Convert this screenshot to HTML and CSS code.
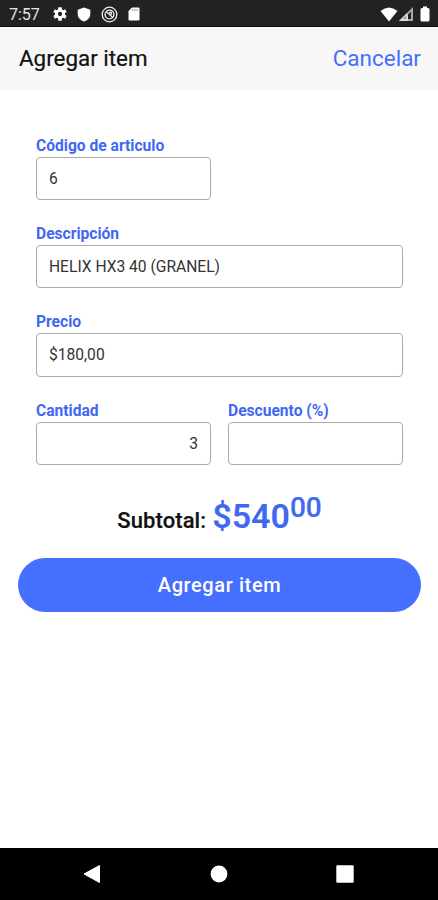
FILE: index.html
```html
<!DOCTYPE html>
<html lang="es">
<head>
<meta charset="utf-8">
<meta name="viewport" content="width=device-width, initial-scale=1">
<title>Agregar item</title>
<link rel="stylesheet" href="styles.css">
</head>
<body>
<div class="screen">
  <div class="status">
    <span class="clock">7:57</span>
    <svg class="gear" width="16" height="16" viewBox="0 0 24 24"><path fill="#fff" fill-rule="evenodd" d="M19.400 13a7.600 7.600 0 0 0 0-2l2.600-2-2.300-4-3 1.200a7.800 7.800 0 0 0-1.700-1L14.500 2h-5l-.5 3.200a7.800 7.800 0 0 0-1.700 1L4.300 5 2 9l2.600 2a7.600 7.600 0 0 0 0 2L2 15l2.300 4 3-1.200a7.800 7.800 0 0 0 1.700 1l.5 3.200h5l.5-3.200a7.800 7.800 0 0 0 1.700-1l3 1.200 2.300-4zM12 15.200a3.200 3.200 0 1 1 0-6.400 3.200 3.200 0 0 1 0 6.400z"/></svg>
    <svg class="shield" width="14" height="15" viewBox="0 0 14 15"><path fill="#fff" d="M7 .5 13.300 2.800v4.200c0 3.500-2.800 6.500-6.300 7.500C3.500 13.500.7 10.500.7 7V2.800z"/></svg>
    <svg class="ring" width="17" height="17" viewBox="0 0 17 17" fill="none" stroke="#eee"><circle cx="8.500" cy="8.500" r="7.300" stroke-width="1.300"/><circle cx="8.500" cy="8.500" r="4.400" stroke-width="1.400"/><path d="m5.300 5.500 6.400 6M8 6.500h2.300v2.300" stroke-width="1.300"/></svg>
    <svg class="sd" width="12" height="14" viewBox="0 0 12 14"><path fill="#fff" d="M4 .5h6.500q1 0 1 1v11q0 1-1 1h-9q-1 0-1-1V4z"/><path stroke="#777" d="M4.700 2.200v1.600M6.900 2.200v1.600M9.100 2.200v1.600"/></svg>
    <svg class="wifi" width="18" height="15" viewBox="0 0 18 15"><path fill="#fff" d="M.5 4Q9-3 17.500 4L9 14.500z"/></svg>
    <svg class="signal" width="16" height="16" viewBox="0 0 16 16"><path fill="#aaa" d="M15 1v14H1z"/><path fill="#222" d="M13 5.500V13H5.500z"/><path fill="#ddd" d="M1 15 9 7v8z"/><path fill="#222" d="m4.500 13 4-4v4z" opacity=".35"/><path fill="#ddd" d="M8.500 8.500h1.500V15H8.500z"/></svg>
    <svg class="battery" width="10" height="16" viewBox="0 0 10 16"><path fill="#fff" d="M3 .5h4V2h1q1.500 0 1.500 1.500v10.500q0 1.500-1.500 1.500H2Q.5 15.500.5 14V3.500Q.5 2 2 2h1z"/></svg>
  </div>
  <header class="header">
    <h1 class="title">Agregar item</h1>
    <a class="cancel">Cancelar</a>
  </header>
  <main class="content">
    <div class="form">
      <div class="field half"><label class="label">Código de articulo</label><div class="box">6</div></div>
      <div class="field wide"><label class="label">Descripción</label><div class="box">HELIX HX3 40 (GRANEL)</div></div>
      <div class="field wide"><label class="label">Precio</label><div class="box">$180,00</div></div>
      <div class="field half"><label class="label">Cantidad</label><div class="box number">3</div></div>
      <div class="field half"><label class="label">Descuento (%)</label><div class="box number"></div></div>
    </div>
    <div class="subtotal"><span class="caption">Subtotal:</span><span class="amount">$540</span><span class="cents">00</span></div>
    <button class="submit">Agregar item</button>
  </main>
  <nav class="navbar">
    <svg width="18" height="20" viewBox="0 0 18 20"><path fill="#fff" stroke="#fff" stroke-linejoin="round" d="M1 10 16.500 1.500v17z"/></svg>
    <svg width="18" height="18" viewBox="0 0 18 18"><circle cx="9" cy="9" r="8.400" fill="#fff"/></svg>
    <svg width="18" height="18" viewBox="0 0 18 18"><rect x=".3" y=".3" width="17.400" height="17.400" rx="1.200" fill="#fff"/></svg>
  </nav>
</div>
</body>
</html>
```
FILE: styles.css
```css
* { box-sizing: border-box; }
body { margin: 0; background: #fff; font-family: Roboto, "Liberation Sans", sans-serif; }
.screen { width: 438px; height: 900px; display: flex; flex-direction: column; overflow: hidden; }
.status { height: 27px; flex: none; display: flex; align-items: center; background: #222; border-bottom: 1px solid #111; padding: 2px 8px 0 9px; }
.clock { color: #e4e4e4; font-size: 16px; width: 43px; }
.shield { margin-left: 9px; }
.ring { margin-left: 10px; }
.sd { margin-left: 10px; }
.wifi { margin-left: auto; }
.battery { margin-left: 6px; }
.header { height: 63px; flex: none; display: flex; align-items: center; justify-content: space-between; background: #f7f7f7; padding: 0 17px 1px 19px; }
.title { margin: 0; font-size: 22.400px; font-weight: 400; color: #111; -webkit-text-stroke: .2px #111; }
.cancel { font-size: 22.500px; color: #456fff; }
.content { flex: 1; padding: 46px 17px 0 18px; }
.form { display: grid; grid-template-columns: 175px 175px; column-gap: 17px; row-gap: 24px; padding: 0 18px; }
.field { display: flex; flex-direction: column; height: 64.200px; }
.wide { grid-column: 1 / 3; }
.half:first-child { grid-column: 1 / 2; }
.label { height: 21px; line-height: 21px; font-size: 15.600px; font-weight: 700; color: #4068f4; }
.box { flex: 1; display: flex; align-items: center; border: 1px solid #aaa; border-radius: 4px; padding: 1px 12px 0; font-size: 15.600px; color: #333; }
.number { justify-content: flex-end; }
.subtotal { display: flex; justify-content: center; align-items: baseline; height: 53px; padding-top: 1px; margin-top: 30px; }
.caption { font-size: 22px; font-weight: 500; color: #111; margin-right: 6px; -webkit-text-stroke: .2px #111; letter-spacing: .1px; }
.amount { font-size: 34px; font-weight: 600; color: #4169f0; }
.cents { font-size: 28px; font-weight: 500; color: #4169f0; transform: translateY(-11px); -webkit-text-stroke: .2px #4169f0; }
.submit { display: block; width: 100%; height: 54px; border: 0; border-radius: 27px; background: #456fff; color: #fff; font: 500 20px Roboto, sans-serif; letter-spacing: .6px; padding: 0; margin-top: 10px; }
.navbar { height: 52px; flex: none; display: flex; align-items: center; justify-content: space-between; background: #000; padding: 0 84px 0 83px; }
```
